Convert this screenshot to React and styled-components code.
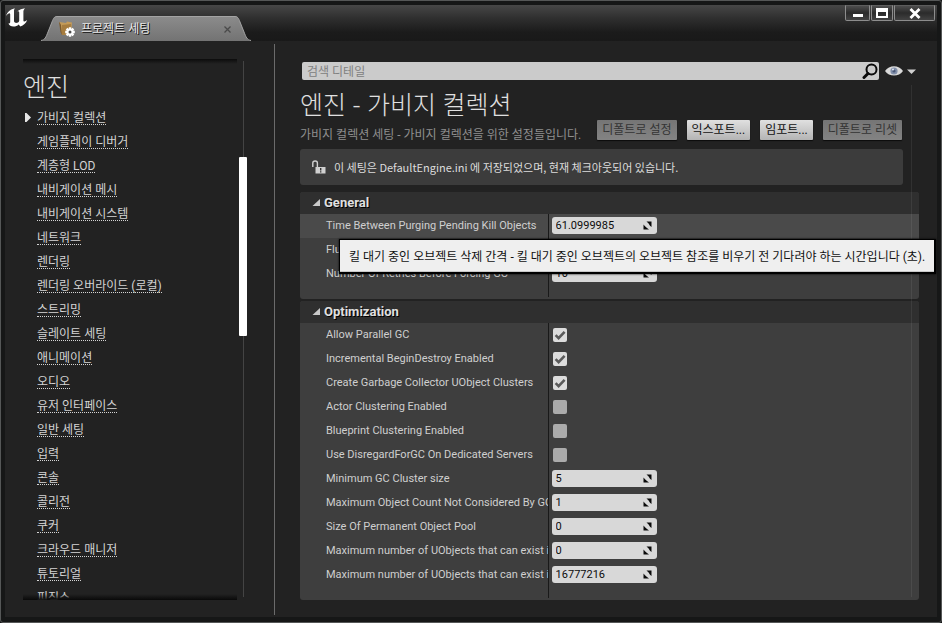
import React, { useState } from "react";
import styled, { createGlobalStyle } from "styled-components";

const GlobalStyle = createGlobalStyle`
  * { box-sizing: border-box; }
  body {
    margin: 0;
    background: #141515;
    color: #c8c8c8;
    font: 400 12px/16px Roboto, "Noto Sans CJK KR", sans-serif;
  }
  button, input {
    font: inherit;
    color: inherit;
    margin: 0;
    padding: 0;
    border: 0;
    border-radius: 0;
    background: none;
  }
  h1, h2, p, ul { margin: 0; padding: 0; }
  ul { list-style: none; }
`;

const Window = styled.div`
  display: flex;
  flex-direction: column;
  height: 100vh;
  padding: 4px 4px 5px;
  border: 1px solid #555757;
  border-radius: 3px;
  background: #161717;
  overflow: hidden;
`;

const TitleBar = styled.header`
  display: flex;
  flex: none;
  align-items: flex-end;
  height: 36px;
  background: linear-gradient(#474747, #303030 35%, #1b1b1b 75%, #191919);
`;

const Logo = styled.svg`
  align-self: flex-start;
  width: 24px;
  height: 21px;
  margin: 2px 12px 0 0;
`;

const Tab = styled.div`
  display: flex;
  height: 25px;
`;

const TabEdge = styled.svg`
  width: 16px;
  height: 25px;
`;

const TabFace = styled.div`
  display: flex;
  align-items: center;
  width: 178px;
  padding-right: 2px;
  border-top: 1px solid #a4a4a4;
  background: linear-gradient(#8b8b8b, #737373);
`;

const TabIcon = styled.svg`
  width: 18px;
  height: 18px;
  margin-left: 1px;
`;

const TabTitle = styled.span`
  flex: 1;
  margin-left: 5px;
  color: #e6e6e6;
  text-shadow: 1px 1px 0 #111;
`;

const TabClose = styled.button`
  display: flex;
  padding: 2px;
`;

const WindowControls = styled.div`
  display: flex;
  align-self: flex-start;
  gap: 1px;
  margin-left: auto;
  margin-right: 2px;
`;

const ControlButton = styled.button`
  display: flex;
  align-items: center;
  justify-content: center;
  width: ${(p) => p.$width};
  height: 16px;
  border: 1px solid #8d8d8d;
  border-top-color: #5d5d5d;
  border-radius: 0 0 2px 2px;
  background: linear-gradient(#4d4d4d, #2b2b2b 50%, #424242);
`;

const Body = styled.div`
  display: flex;
  flex: 1;
  min-height: 0;
  padding: 3px 0 2px;
  background: #222;
`;

const Sidebar = styled.nav`
  display: flex;
  flex: 0 0 270px;
  padding: 15px 27px 15px 18px;
  border-right: 1px solid #6b6b6b;
`;

const NavPane = styled.div`
  flex: 1;
  min-width: 0;
  overflow: hidden;
  background:
    linear-gradient(#0c0c0c, #222) top / 100% 5px no-repeat;
`;

const NavShade = styled.div`
  display: grid;
  flex: 1;
  min-width: 0;
  & > * { grid-area: 1 / 1; min-height: 0; }
  &::after {
    content: "";
    grid-area: 1 / 1;
    align-self: end;
    height: 6px;
    background: linear-gradient(transparent, #090909);
    z-index: 1;
  }
  grid-template-rows: minmax(0, 1fr);
`;

const NavHeading = styled.h2`
  padding-top: 10px;
  font-size: 25px;
  font-weight: 300;
  line-height: 37px;
  color: #e0e0e0;
`;

const NavItem = styled.li`
  display: flex;
  align-items: center;
  height: 24px;
`;

const NavMarker = styled.svg`
  width: 6px;
  height: 9px;
  margin: 0 6px 2px 2px;
  fill: #e6e6e6;
  visibility: ${(p) => (p.$active ? "visible" : "hidden")};
`;

const NavLink = styled.a`
  line-height: 12px;
  color: #d4d4d4;
  text-decoration: none;
  border-bottom: 1px dotted #d4d4d4;
`;

const ScrollTrack = styled.div`
  display: grid;
  grid-template-rows: 96px 179px 1fr;
  width: 8px;
  margin: 2px 0 3px 2px;
  background: linear-gradient(#444, #444) center / 1px 100% no-repeat;
`;

const ScrollThumb = styled.div`
  grid-row: 2;
  border-radius: 1px;
  background: #fff;
`;

const Main = styled.main`
  position: relative;
  flex: 1;
  min-width: 0;
  padding: 18px 18px 0 25px;
`;

const SearchRow = styled.div`
  display: flex;
  align-items: center;
  padding: 0 3px 0 2px;
`;

const SearchBox = styled.label`
  display: flex;
  flex: 1;
  align-items: center;
  height: 18px;
  margin-right: 6px;
  padding: 0 0 0 5px;
  border-radius: 2px;
  background: #cbcbcb;
`;

const SearchInput = styled.input`
  flex: 1;
  min-width: 0;
  height: 18px;
  padding-top: 2px;
  color: #222;
  outline: none;
  &::placeholder { color: #808080; opacity: 1; }
`;

const ViewOptions = styled.button`
  display: flex;
  align-items: center;
  gap: 4px;
`;

const PageTitle = styled.h1`
  margin-top: 9px;
  font-family: "Noto Sans", "Noto Sans CJK KR", sans-serif;
  font-size: 25px;
  font-weight: 300;
  line-height: 31px;
  color: #e0e0e0;
`;

const SubRow = styled.div`
  display: flex;
  justify-content: space-between;
  height: 29px;
  margin-right: 17px;
`;

const Description = styled.p`
  line-height: 30px;
  white-space: nowrap;
  color: #8f8f8f;
`;

const Actions = styled.div`
  display: flex;
  align-items: flex-start;
  gap: 10px;
`;

const ActionButton = styled.button`
  height: 20px;
  padding: 0 5px;
  border-radius: 1px;
  white-space: nowrap;
  color: #111;
  background: linear-gradient(#e0e0e0, #b4b4b4);
  box-shadow: 0 1px 1px #0c0c0c;
  &:disabled {
    color: #343434;
    background: linear-gradient(#757575, #838383);
  }
`;

const Notice = styled.div`
  display: flex;
  align-items: center;
  gap: 8px;
  height: 36px;
  margin: 0 16px 7px 0;
  padding-left: 12px;
  border-radius: 3px;
  font-family: "Noto Sans CJK KR", sans-serif;
  font-size: 11px;
  color: #dcdcdc;
  background: #3c3c3c;
`;

const Panel = styled.section`
  margin-bottom: 2px;
  padding-bottom: 2px;
  border-radius: 3px;
  background: #3e3e3e;
`;

const PanelHeader = styled.button`
  display: flex;
  align-items: center;
  gap: 4px;
  width: 100%;
  height: 22px;
  padding-left: 12px;
  border-radius: 3px 3px 0 0;
  font-size: 13px;
  font-weight: 700;
  color: #e0e0e0;
  text-shadow: 1px 1px 0 #000;
  background: #2f2f2f;
`;

const Row = styled.div`
  position: relative;
  display: grid;
  grid-template-columns: minmax(0, 2fr) minmax(0, 3fr);
  height: 24px;
  background: ${(p) => (p.$hovered ? "#4a4a4a" : "transparent")};
`;

const RowEnd = styled(Row)`
  height: ${(p) => p.$height};
`;

const RowLabel = styled.label`
  padding-left: 26px;
  overflow: hidden;
  white-space: nowrap;
  font-size: 11px;
  line-height: 23px;
  color: #cfcfcf;
`;

const RowValue = styled.div`
  display: flex;
  align-items: flex-start;
  padding: 3px 0 0 3px;
  border-left: 1px solid #191919;
`;

const NumberBox = styled.div`
  display: flex;
  align-items: center;
  width: 105px;
  height: 17px;
  padding: 0 5px 0 4px;
  border-radius: 3px;
  background: #d8d8d8;
`;

const NumberInput = styled.input`
  flex: 1;
  min-width: 0;
  font-size: 11px;
  color: #0c0c0c;
  outline: none;
`;

const CheckBox = styled.span`
  display: grid;
  width: 14px;
  height: 14px;
  margin: 2px 0 0 1px;
  & > * { grid-area: 1 / 1; }
  & > svg { pointer-events: none; }
`;

const CheckInput = styled.input`
  appearance: none;
  width: 14px;
  height: 14px;
  border-radius: 2px;
  background: #ababab;
  &:checked { background: #dcdcdc; }
`;

const Tooltip = styled.div`
  position: absolute;
  z-index: 2;
  top: 25px;
  left: 39px;
  padding: 9px 9px 7px;
  border: 1px solid #000;
  border-width: 1px 2px 2px 1px;
  white-space: nowrap;
  color: #111;
  background: #efefef;
  box-shadow: inset 0 -1px 0 #c8c8c8, 0 0 2px #000;
`;

const ContentTrack = styled.div`
  position: absolute;
  top: 41px;
  right: 25px;
  bottom: 18px;
  width: 1px;
  background: rgba(255, 255, 255, 0.07);
  pointer-events: none;
`;

const navItems = [
  "가비지 컬렉션", "게임플레이 디버거", "계층형 LOD", "내비게이션 메시", "내비게이션 시스템",
  "네트워크", "렌더링", "렌더링 오버라이드 (로컬)", "스트리밍", "슬레이트 세팅", "애니메이션",
  "오디오", "유저 인터페이스", "일반 세팅", "입력", "콘솔", "콜리전", "쿠커",
  "크라우드 매니저", "튜토리얼", "피직스",
];

const panels = [
  {
    title: "General",
    tail: "11px",
    rows: [
      {
        label: "Time Between Purging Pending Kill Objects",
        value: "61.0999985",
        tooltip: "킬 대기 중인 오브젝트 삭제 간격 - 킬 대기 중인 오브젝트의 오브젝트 참조를 비우기 전 기다려야 하는 시간입니다 (초).",
      },
      { label: "Flush Streaming On GC", value: false },
      { label: "Number Of Retries Before Forcing GC", value: "10" },
    ],
  },
  {
    title: "Optimization",
    tail: "11px",
    rows: [
      { label: "Allow Parallel GC", value: true },
      { label: "Incremental BeginDestroy Enabled", value: true },
      { label: "Create Garbage Collector UObject Clusters", value: true },
      { label: "Actor Clustering Enabled", value: false },
      { label: "Blueprint Clustering Enabled", value: false },
      { label: "Use DisregardForGC On Dedicated Servers", value: false },
      { label: "Minimum GC Cluster size", value: "5" },
      { label: "Maximum Object Count Not Considered By GC", value: "1" },
      { label: "Size Of Permanent Object Pool", value: "0" },
      { label: "Maximum number of UObjects that can exist in cooked game", value: "0" },
      { label: "Maximum number of UObjects that can exist in the editor", value: "16777216" },
    ],
  },
];

function NumberField({ id, initial }) {
  const [value, setValue] = useState(initial);
  return (
    <NumberBox>
      <NumberInput id={id} value={value} onChange={(e) => setValue(e.target.value)} />
      <svg width="9" height="9" viewBox="0 0 9 9" fill="#0a0a0a" aria-hidden="true">
        <path d="M3.5 0.5H8.5V6L7 4.8L5.6 2.6ZM0.5 3.5V8.5H6L4 7L2 5.2Z" />
      </svg>
    </NumberBox>
  );
}

function CheckField({ id, initial }) {
  const [checked, setChecked] = useState(initial);
  return (
    <CheckBox>
      <CheckInput id={id} type="checkbox" checked={checked} onChange={(e) => setChecked(e.target.checked)} />
      {checked && (
        <svg width="14" height="14" viewBox="0 0 14 14" fill="none" stroke="#5a5a5a" strokeWidth="2.6" aria-hidden="true">
          <path d="M2.6 7.2L5.6 10.2L11.6 3.8" />
        </svg>
      )}
    </CheckBox>
  );
}

function SettingsPanel({ panel }) {
  return (
    <Panel>
      <PanelHeader type="button" aria-expanded="true">
        <svg width="8" height="8" viewBox="0 0 8 8" fill="#c9c9c9" aria-hidden="true">
          <path d="M8 0V7H0.5Z" />
        </svg>
        {panel.title}
      </PanelHeader>
      {panel.rows.map((row, i) => {
        const id = `${panel.title}-${i}`;
        return (
          <Row key={id} $hovered={Boolean(row.tooltip)}>
            <RowLabel htmlFor={id}>{row.label}</RowLabel>
            <RowValue>
              {typeof row.value === "boolean"
                ? <CheckField id={id} initial={row.value} />
                : <NumberField id={id} initial={row.value} />}
            </RowValue>
            {row.tooltip && <Tooltip role="tooltip">{row.tooltip}</Tooltip>}
          </Row>
        );
      })}
      <RowEnd $height={panel.tail}><span /><RowValue /></RowEnd>
    </Panel>
  );
}

function UnrealLogo() {
  return (
    <Logo viewBox="0 0 24 21" aria-hidden="true">
      <path
        fill="#fff"
        d="M1 9C2.2 5 5.5 2.2 10 1.2C9.3 2 9 2.8 9 4V14.2C9.4 15.6 10.8 16.2 12.2 15.8C13.4 15.4 14.2 14.6 14.2 13.8V5.6C14.2 4.4 13.4 4 12.4 4.2C14.4 2.6 17 1.6 20.2 1.2C18.9 2.4 18.4 3.4 18.4 4.8V13.2C18.4 14.8 20 15.2 22.2 12.8C21.2 16.4 18.4 18.4 15.4 19.4L13.6 17.4C12.4 18.8 10.6 19.6 8.4 19.6C6 19.4 4.2 18.2 3.4 16.4C4.6 16.8 5.2 16.2 5.2 14.8V7.2C5.2 5.6 3 6 1 9Z"
      />
    </Logo>
  );
}

const gearTeeth = [0, 45, 90, 135];

export default function App() {
  return (
    <>
      <GlobalStyle />
      <Window>
        <TitleBar>
          <UnrealLogo />
          <Tab>
            <TabEdge viewBox="0 0 16 25" aria-hidden="true">
              <defs>
                <linearGradient id="tabFill" x1="0" y1="0" x2="0" y2="1">
                  <stop offset="0" stopColor="#8b8b8b" />
                  <stop offset="1" stopColor="#737373" />
                </linearGradient>
              </defs>
              <path fill="url(#tabFill)" d="M0 25C4 24 5 21 7 16L11 6C12.5 2 13.5 0 16 0V25Z" />
              <path fill="none" stroke="#a4a4a4" d="M0 24.5C4 24 5 21 7 16L11 6C12.5 2 13.5 0.5 16 0.5" />
            </TabEdge>
            <TabFace>
              <TabIcon viewBox="0 0 18 18" aria-hidden="true">
                <path fill="#7c5a2b" d="M1 2L4 4V15L2.5 12Z" />
                <path fill="#c39a58" d="M1.5 2L8 3L9 1.5L14 2.5L13 14L4 15L3 5Z" />
                <path fill="#a67c3e" d="M4 5L13 4L12 14L4 15Z" />
                <g stroke="#fff" strokeWidth="2.4">
                  {gearTeeth.map((a) => (
                    <path key={a} d="M12 7.2V16.8" transform={`rotate(${a} 12 12)`} />
                  ))}
                </g>
                <circle cx="12" cy="12" r="3.6" fill="#fff" />
                <circle cx="12" cy="12" r="1.5" fill="#4c4c4c" />
              </TabIcon>
              <TabTitle>프로젝트 세팅</TabTitle>
              <TabClose type="button" aria-label="탭 닫기">
                <svg width="7" height="7" viewBox="0 0 7 7" stroke="#4a4a4a" strokeWidth="1.3">
                  <path d="M0.5 0.5L6.5 6.5M6.5 0.5L0.5 6.5" />
                </svg>
              </TabClose>
            </TabFace>
            <TabEdge viewBox="0 0 16 25" aria-hidden="true">
              <path fill="url(#tabFill)" d="M16 25C12 24 11 21 9 16L5 6C3.5 2 2.5 0 0 0V25Z" />
              <path fill="none" stroke="#a4a4a4" d="M16 24.5C12 24 11 21 9 16L5 6C3.5 2 2.5 0.5 0 0.5" />
            </TabEdge>
          </Tab>
          <WindowControls>
            <ControlButton type="button" $width="25px" aria-label="최소화">
              <svg width="12" height="10" viewBox="0 0 12 10"><path fill="#fff" d="M1 6H11V9H1Z" /></svg>
            </ControlButton>
            <ControlButton type="button" $width="22px" aria-label="최대화">
              <svg width="12" height="10" viewBox="0 0 12 10"><path fill="#fff" fillRule="evenodd" d="M0 0H12V10H0ZM2 4V8H10V4Z" /></svg>
            </ControlButton>
            <ControlButton type="button" $width="41px" aria-label="닫기">
              <svg width="12" height="11" viewBox="0 0 12 11" stroke="#fff" strokeWidth="2.8"><path d="M1.5 1L10.5 10M10.5 1L1.5 10" /></svg>
            </ControlButton>
          </WindowControls>
        </TitleBar>

        <Body>
          <Sidebar>
            <NavShade>
              <NavPane>
                <NavHeading>엔진</NavHeading>
                <ul>
                  {navItems.map((item, i) => (
                    <NavItem key={item}>
                      <NavMarker $active={i === 0} viewBox="0 0 6 9" aria-hidden="true">
                        <path d="M0 0H1.5L6 4.5L1.5 9H0Z" />
                      </NavMarker>
                      <NavLink href="#">{item}</NavLink>
                    </NavItem>
                  ))}
                </ul>
              </NavPane>
            </NavShade>
            <ScrollTrack><ScrollThumb /></ScrollTrack>
          </Sidebar>

          <Main>
            <SearchRow>
              <SearchBox>
                <SearchInput type="text" placeholder="검색 디테일" aria-label="검색 디테일" />
                <svg width="17" height="16" viewBox="0 0 17 16" fill="none" stroke="#0a0a0a" aria-hidden="true">
                  <circle cx="9.5" cy="6.6" r="5" strokeWidth="2" />
                  <path d="M6 10.5L2 14.5" strokeWidth="3" strokeLinecap="round" />
                </svg>
              </SearchBox>
              <ViewOptions type="button" aria-label="보기 옵션">
                <svg width="18" height="12" viewBox="0 0 18 12" aria-hidden="true">
                  <path fill="#d9d9d9" d="M0 6C4 -0.5 14 -0.5 18 6C14 12 4 12 0 6Z" />
                  <circle cx="9" cy="6" r="3.6" fill="#8290ab" />
                  <circle cx="9" cy="6" r="1.6" fill="#4a5878" />
                  <circle cx="8" cy="4.6" r="1" fill="#dfe6f2" />
                </svg>
                <svg width="9" height="5" viewBox="0 0 9 5" fill="#d0d0d0" aria-hidden="true"><path d="M0 0.5H9L4.5 5Z" /></svg>
              </ViewOptions>
            </SearchRow>
            <PageTitle>엔진 - 가비지 컬렉션</PageTitle>
            <SubRow>
              <Description>가비지 컬렉션 세팅 - 가비지 컬렉션을 위한 설정들입니다.</Description>
              <Actions>
                <ActionButton type="button" disabled>디폴트로 설정</ActionButton>
                <ActionButton type="button">익스포트...</ActionButton>
                <ActionButton type="button">임포트...</ActionButton>
                <ActionButton type="button" disabled>디폴트로 리셋</ActionButton>
              </Actions>
            </SubRow>
            <Notice>
              <svg width="14" height="14" viewBox="0 0 14 14" aria-hidden="true">
                <path fill="none" stroke="#d0d0d0" strokeWidth="1.4" d="M0.8 7V3C0.8 0.4 5.4 0.4 5.4 3V7" />
                <path fill="#d0d0d0" d="M3.5 7H13.5V13.5H3.5Z" />
                <path fill="#333" d="M8 8H9.4V10.6H8ZM8 11.2H9.4V12.6H8Z" />
              </svg>
              <span>이 세팅은 DefaultEngine.ini 에 저장되었으며, 현재 체크아웃되어 있습니다.</span>
            </Notice>
            {panels.map((panel) => <SettingsPanel key={panel.title} panel={panel} />)}
            <ContentTrack />
          </Main>
        </Body>
      </Window>
    </>
  );
}
